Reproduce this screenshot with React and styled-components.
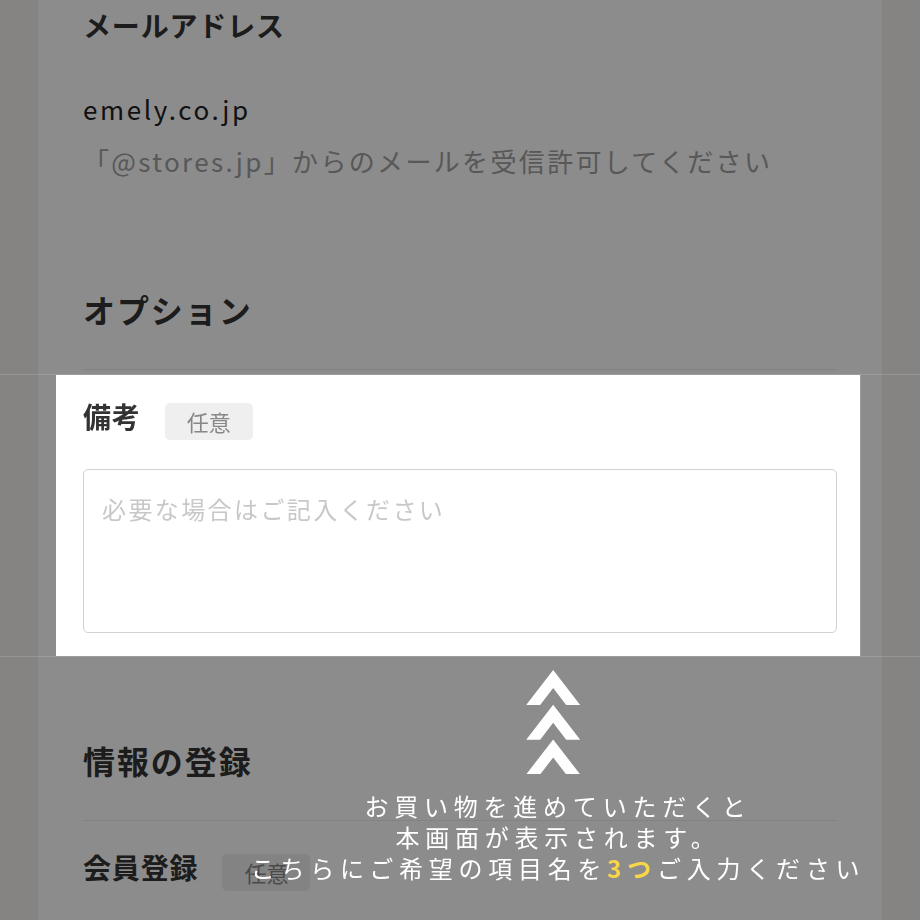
import styled, { createGlobalStyle } from "styled-components";

const GlobalStyle = createGlobalStyle`
  html, body {
    margin: 0;
    padding: 0;
    background: #f2f0ee;
    font-family: "Noto Sans CJK JP", "Noto Sans", sans-serif;
    overflow: hidden;
  }
`;

const Page = styled.div`
  max-width: 844px;
  min-height: 1000px;
  margin: 0 auto;
  padding: 5px 45px 0 45px;
  box-sizing: border-box;
  background: #fff;
`;

const Field = styled.div`
  position: relative;
  margin: 0 -23px 0 -27px;
  padding: ${(p) => (p.$first ? "0 23px 0 27px" : "21px 23px 23px 27px")};
  background: #fff;
  ${(p) =>
    p.$focus &&
    `
    z-index: 2;
    box-shadow: 1px 0 0 rgba(255, 255, 255, 0.15);
    &::before, &::after {
      content: "";
      position: absolute;
      left: -100vw;
      right: -100vw;
      height: 1px;
      background: rgba(255, 255, 255, 0.15);
    }
    &::before { top: -1px; }
    &::after { bottom: -1px; }
  `}
`;

const LabelRow = styled.div`
  display: flex;
  align-items: flex-start;
  gap: 24px;
`;

const Label = styled.div`
  font-size: 28px;
  line-height: 40px;
  font-weight: 700;
  letter-spacing: 0.03em;
  color: #333;
`;

const Badge = styled.span`
  margin-top: 7px;
  height: 37px;
  padding: 0 22px;
  border-radius: 5px;
  background: #efefef;
  color: #888;
  font-size: 22px;
  line-height: 37px;
`;

const Value = styled.div`
  font-size: 26px;
  line-height: 52px;
  letter-spacing: ${(p) => (p.$muted ? "0.09em" : "0.1em")};
  color: ${(p) => (p.$muted ? "#a0a0a0" : "#222")};
  margin-top: ${(p) => p.$top || 0}px;
`;

const SectionTitle = styled.h2`
  margin: ${(p) => p.$top}px 0 5px;
  padding-bottom: 38px;
  border-bottom: 1px solid #eee;
  font-size: 32px;
  line-height: 44px;
  font-weight: 700;
  letter-spacing: 0.06em;
  color: #333;
`;

const TextArea = styled.textarea`
  display: block;
  width: 100%;
  height: 164px;
  margin-top: 29px;
  padding: 21px 18px;
  box-sizing: border-box;
  border: 1.5px solid #d2d2d2;
  border-radius: 5px;
  resize: none;
  font-family: inherit;
  font-size: 24px;
  line-height: 36px;
  letter-spacing: 0.1em;
  color: #333;
  &::placeholder {
    color: #c8c8c8;
  }
`;

const Overlay = styled.div`
  position: fixed;
  inset: 0;
  z-index: 1;
  background: rgba(0, 0, 0, 0.45);
`;

const Tip = styled.div`
  position: absolute;
  top: calc(100% + 14px);
  left: 497.5px;
  transform: translateX(-50%);
  display: flex;
  flex-direction: column;
  align-items: center;
  white-space: nowrap;
`;

const TipText = styled.p`
  margin: 16px 0 0;
  padding-left: 9px;
  text-align: center;
  font-size: 24px;
  line-height: 31px;
  letter-spacing: 0.24em;
  color: #fff;
  b {
    color: #f7d648;
    font-weight: 700;
  }
`;

const Chevrons = () => (
  <svg width="54" height="104" viewBox="0 0 54 104">
    {[0, 34.7, 69.4].map((y) => (
      <polygon
        key={y}
        fill="#fff"
        points={`27,${y} 54,${y + 35} 40,${y + 35} 27,${y + 18} 14,${y + 35} 0,${y + 35}`}
      />
    ))}
  </svg>
);

export default function App() {
  return (
    <>
      <GlobalStyle />
      <Page>
        <Field $first>
          <Label>メールアドレス</Label>
          <Value $top={38}>emely.co.jp</Value>
          <Value $muted>「@stores.jp」からのメールを受信許可してください</Value>
        </Field>

        <SectionTitle $top={100}>オプション</SectionTitle>
        <Field $focus>
          <LabelRow>
            <Label>備考</Label>
            <Badge>任意</Badge>
          </LabelRow>
          <TextArea placeholder="必要な場合はご記入ください" />
          <Tip>
            <Chevrons />
            <TipText>
              お買い物を進めていただくと
              <br />
              本画面が表示されます。
              <br />
              こちらにご希望の項目名を<b>3つ</b>ご入力ください
            </TipText>
          </Tip>
        </Field>

        <SectionTitle $top={82}>情報の登録</SectionTitle>
        <Field>
          <LabelRow>
            <Label>会員登録</Label>
            <Badge>任意</Badge>
          </LabelRow>
        </Field>
      </Page>
      <Overlay />
    </>
  );
}
